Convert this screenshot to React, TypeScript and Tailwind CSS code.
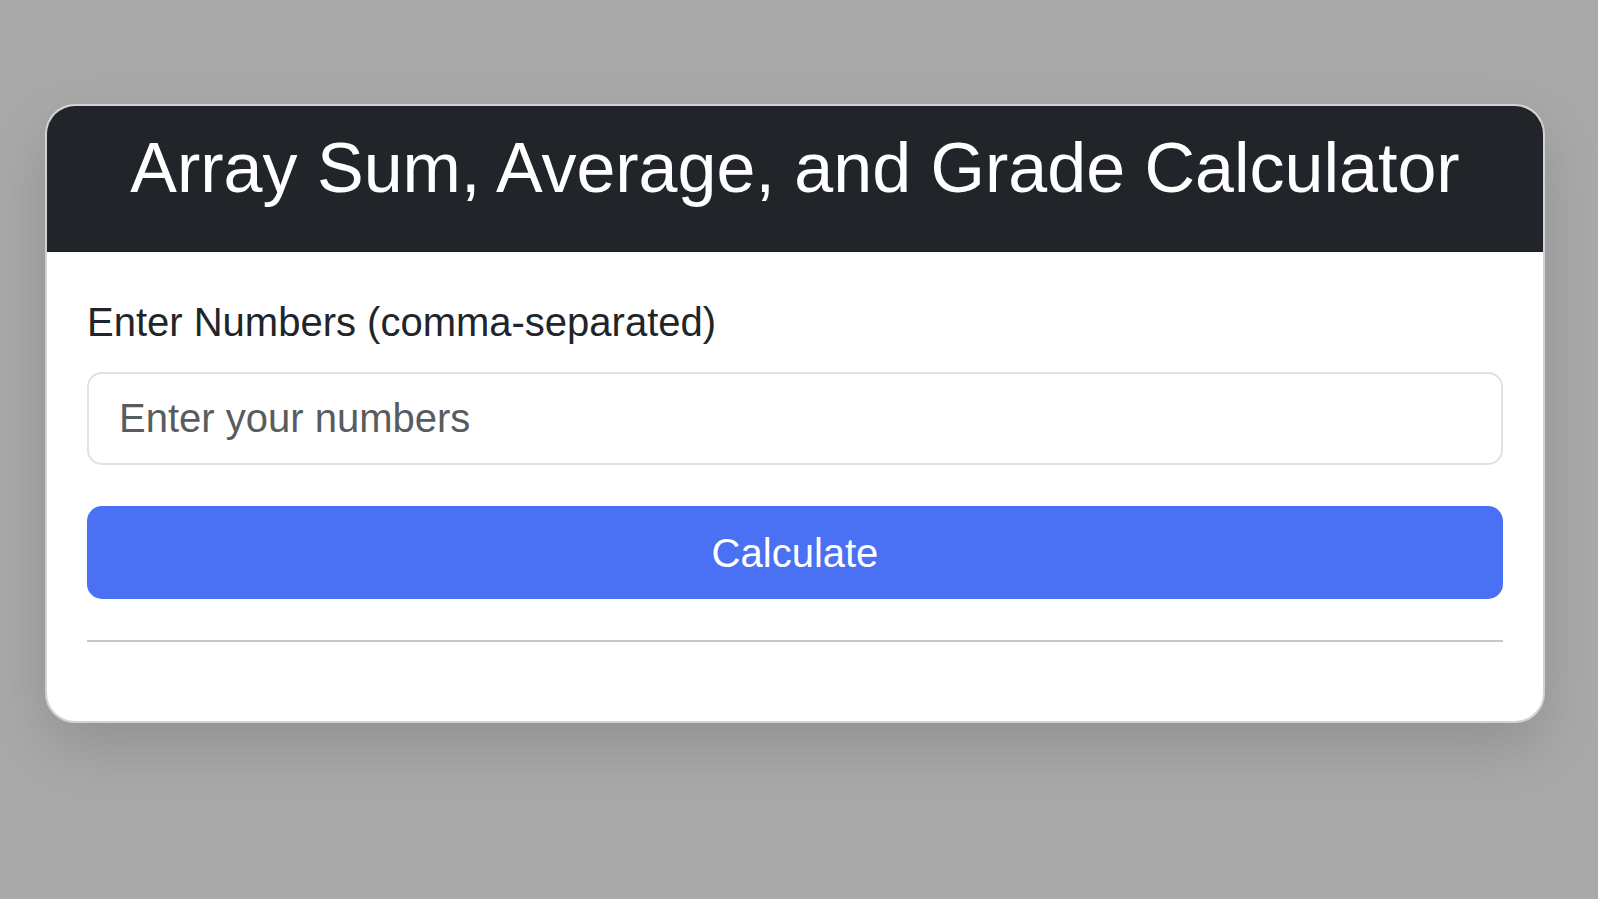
import React from 'react';

const App = () => {
    return (
        <div className="min-h-screen bg-[#a9a9a9] pt-[104px] pl-[45px] font-['Liberation_Sans',Arial,sans-serif]">
            <div className="w-[1500px] bg-white border-2 border-[#d2d2d2] rounded-[30px] overflow-hidden shadow-[0_24px_60px_rgba(0,0,0,0.14)]">
                <div className="h-[146px] bg-[#212529] pt-[20px] border-b border-[#1a1d20]">
                    <h1 className="text-[70px] leading-[84px] text-white text-center">
                        Array Sum, Average, and Grade Calculator
                    </h1>
                </div>
                <div className="p-[40px]">
                    <label className="block text-[40px] leading-[60px] text-[#212529] mb-[20px]">
                        Enter Numbers (comma-separated)
                    </label>
                    <input
                        type="text"
                        placeholder="Enter your numbers"
                        className="block w-full h-[93px] border-2 border-[#dee2e6] rounded-[15px] px-[30px] text-[40px] text-[#212529] placeholder:text-[#595c5f] outline-none mb-[41px]"
                    />
                    <button className="block w-full h-[93px] bg-[#4a70f3] rounded-[15px] text-[40px] text-white">
                        Calculate
                    </button>
                    <hr className="mt-[41px] mb-[39px] border-0 border-t-2 border-[#c8c8c8]" />
                </div>
            </div>
        </div>
    );
};

export default App;
